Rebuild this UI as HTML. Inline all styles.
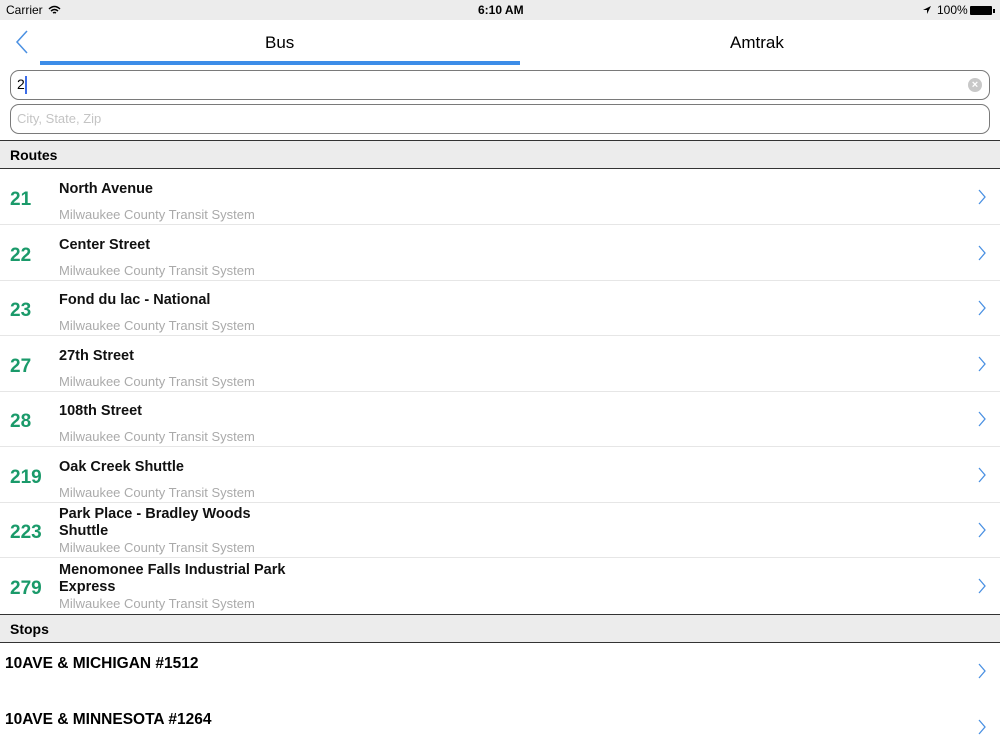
<!DOCTYPE html>
<html><head><style>
*{margin:0;padding:0;box-sizing:border-box}
body{width:1000px;height:750px;overflow:hidden;background:#fff;font-family:"Liberation Sans",sans-serif;position:relative}
.a{position:absolute}
.sb{top:0;left:0;width:1000px;height:20px;background:#ececec;font-size:12px}
.inp{left:10px;width:980px;height:30px;border:1.5px solid #7a7a7a;border-radius:9px;background:#fff}
.hdr{left:0;width:1000px;height:29px;background:#ececec;border-top:1.5px solid #333;border-bottom:1.5px solid #333;font-size:14px;font-weight:bold;padding:6px 10px}
.row{left:0;width:1000px;height:56px;border-bottom:1px solid #e6e6e6}
.num{left:10px;top:20px;font-size:19px;font-weight:bold;color:#1a9a6a}
.t{left:59px;font-size:14.5px;font-weight:bold;color:#111;line-height:17px}
.s{left:59px;top:38px;font-size:13px;color:#aaa}
.ch{right:14px;top:20px}
.st{left:5px;font-size:15.5px;font-weight:bold}
</style></head><body>
<div class="a sb">
<span class="a" style="left:6px;top:3px">Carrier</span>
<svg class="a" style="left:48px;top:5px" width="13" height="10" viewBox="0 0 13 10"><path d="M1 4Q6.5-1 12 4M3 6Q6.5 3 10 6M5 8Q6.5 7 8 8" stroke="#000" stroke-width="1.5" fill="none"/></svg>
<span class="a" style="left:478px;top:3px;font-weight:bold">6:10 AM</span>
<svg class="a" style="left:922px;top:5px" width="10" height="10"><path d="M9 1L1 5H5V9Z" fill="#000"/></svg>
<span class="a" style="left:937px;top:3px">100%</span>
<div class="a" style="left:970px;top:6px;width:22px;height:9px;background:#000;border-radius:1px"></div>
<div class="a" style="left:993px;top:9px;width:2px;height:4px;background:#000"></div>
</div>
<svg class="a" style="left:14px;top:29px" width="16" height="26"><path d="M13 2L3 13L13 24" stroke="#4a90e2" stroke-width="1.5" fill="none"/></svg>
<div class="a" style="left:265px;top:33px;font-size:17px">Bus</div>
<div class="a" style="left:730px;top:33px;font-size:17px">Amtrak</div>
<div class="a" style="left:40px;top:61px;width:480px;height:4px;background:#3d8de8"></div>
<div class="a inp" style="top:70px"><span class="a" style="left:6px;top:5px;font-size:14px">2</span><div class="a" style="left:14px;top:5px;width:2px;height:18px;background:#3d6de8"></div>
<div class="a" style="right:7px;top:7px;width:14px;height:14px;border-radius:50%;background:#c8c8c8;color:#fff;font-size:11px;line-height:14px;text-align:center;font-weight:bold">×</div></div>
<div class="a inp" style="top:104px"><span class="a" style="left:6px;top:6px;font-size:13px;color:#c4c4c4">City, State, Zip</span></div>
<div class="a hdr" style="top:140px">Routes</div>

<div class="a row" style="top:169px"><div class="a num">21</div><div class="a t" style="top:12px">North Avenue</div><div class="a s">Milwaukee County Transit System</div><svg class="a ch" width="8" height="16"><path d="M1 1L7 8L1 15" stroke="#4a90e2" stroke-width="1.3" fill="none"/></svg></div>
<div class="a row" style="top:225px"><div class="a num">22</div><div class="a t" style="top:12px">Center Street</div><div class="a s">Milwaukee County Transit System</div><svg class="a ch" width="8" height="16"><path d="M1 1L7 8L1 15" stroke="#4a90e2" stroke-width="1.3" fill="none"/></svg></div>
<div class="a row" style="top:280px"><div class="a num">23</div><div class="a t" style="top:12px">Fond du lac - National</div><div class="a s">Milwaukee County Transit System</div><svg class="a ch" width="8" height="16"><path d="M1 1L7 8L1 15" stroke="#4a90e2" stroke-width="1.3" fill="none"/></svg></div>
<div class="a row" style="top:336px"><div class="a num">27</div><div class="a t" style="top:12px">27th Street</div><div class="a s">Milwaukee County Transit System</div><svg class="a ch" width="8" height="16"><path d="M1 1L7 8L1 15" stroke="#4a90e2" stroke-width="1.3" fill="none"/></svg></div>
<div class="a row" style="top:391px"><div class="a num">28</div><div class="a t" style="top:12px">108th Street</div><div class="a s">Milwaukee County Transit System</div><svg class="a ch" width="8" height="16"><path d="M1 1L7 8L1 15" stroke="#4a90e2" stroke-width="1.3" fill="none"/></svg></div>
<div class="a row" style="top:447px"><div class="a num">219</div><div class="a t" style="top:12px">Oak Creek Shuttle</div><div class="a s">Milwaukee County Transit System</div><svg class="a ch" width="8" height="16"><path d="M1 1L7 8L1 15" stroke="#4a90e2" stroke-width="1.3" fill="none"/></svg></div>
<div class="a row" style="top:502px"><div class="a num">223</div><div class="a t" style="top:4px">Park Place - Bradley Woods<br>Shuttle</div><div class="a s">Milwaukee County Transit System</div><svg class="a ch" width="8" height="16"><path d="M1 1L7 8L1 15" stroke="#4a90e2" stroke-width="1.3" fill="none"/></svg></div>
<div class="a row" style="top:558px;border:none"><div class="a num">279</div><div class="a t" style="top:4px">Menomonee Falls Industrial Park<br>Express</div><div class="a s">Milwaukee County Transit System</div><svg class="a ch" width="8" height="16"><path d="M1 1L7 8L1 15" stroke="#4a90e2" stroke-width="1.3" fill="none"/></svg></div>

<div class="a hdr" style="top:614px">Stops</div>
<div class="a st" style="top:655px">10AVE &amp; MICHIGAN #1512</div>
<svg class="a" style="right:14px;top:663px" width="8" height="16"><path d="M1 1L7 8L1 15" stroke="#4a90e2" stroke-width="1.3" fill="none"/></svg>
<div class="a st" style="top:711px">10AVE &amp; MINNESOTA #1264</div>
<svg class="a" style="right:14px;top:719px" width="8" height="16"><path d="M1 1L7 8L1 15" stroke="#4a90e2" stroke-width="1.3" fill="none"/></svg>
</body></html>
